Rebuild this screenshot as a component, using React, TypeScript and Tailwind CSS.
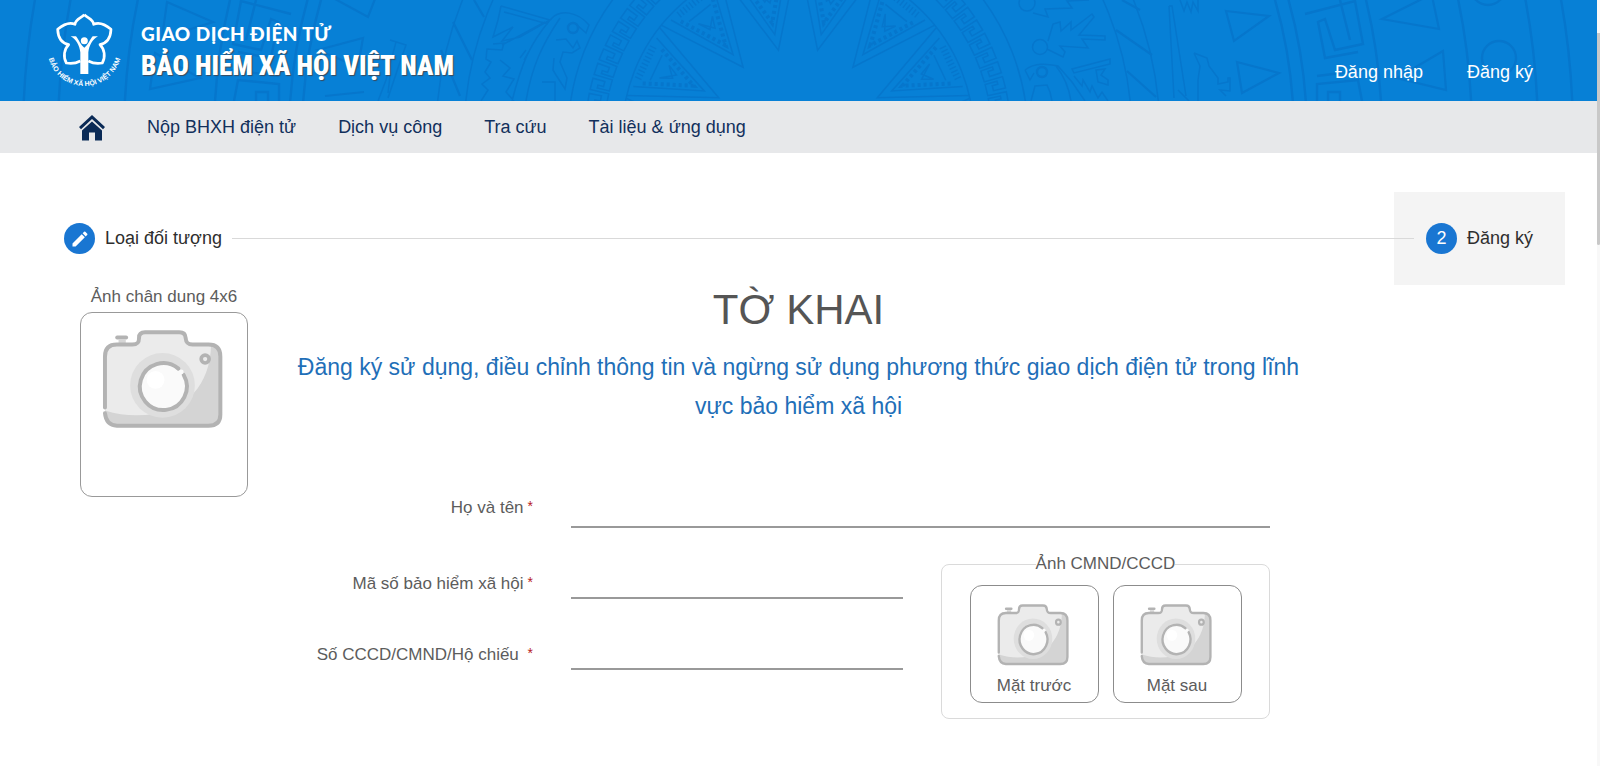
import type { ReactNode } from "react";

const CX = 798;
const CY = 136;

/** Point on the drum at a radius and an angle measured in degrees from straight up. */
function polar(r: number, deg: number) {
  const a = (deg * Math.PI) / 180;
  return `${(CX + r * Math.sin(a)).toFixed(1)} ${(CY - r * Math.cos(a)).toFixed(1)}`;
}

function line(points: [number, number][], close = false) {
  return "M" + points.map(([r, d]) => polar(r, d)).join("L") + (close ? "Z" : "");
}

function meander(inner: number, outer: number, step: number) {
  const h = outer - inner;
  const pts: [number, number][] = [];
  for (let d = -90; d < 90; d += step) {
    pts.push(
      [inner, d],
      [outer, d],
      [outer, d + step * 0.75],
      [inner + h * 0.35, d + step * 0.75],
      [inner + h * 0.35, d + step * 0.4],
      [inner + h * 0.65, d + step * 0.4],
      [inner + h * 0.65, d + step * 0.2],
      [inner, d + step * 0.2],
    );
  }
  return line(pts);
}

const rings = [176, 230, 334, 362, 496, 509, 584, 674, 740, 775];
const rays = [-90, -64.3, -38.6, -12.9, 12.9, 38.6, 64.3, 90];

const key =
  "M1305 14L1355 1L1363 44L1335 50L1325 19L1318 22L1325 58L1358 52M1317 76L1365 70M1317 101V84L1358 80L1362 101M1328 101V92H1340V101M1340 0L1350 40M1303 -4L1330 -10";

const figure =
  "M501 6L550 20L520 37L502 41L513 27L493 37L498 20L501 6M550 20C560 8 578 12 589 25L586 33L577 25M550 20C530 44 522 62 512 101M560 18C542 45 532 66 526 101M556 40L566 39L573 48L577 41L580 48L572 53L563 52L560 62L567 78L565 89L556 75L553 70L554 58M493 44L504 43L502 50L487 49L486 59L491 62L485 72L490 78L482 84L488 90L481 101M500 60L510 68L503 76L514 79L506 92L514 101M502 45L545 22M504 12L548 24M542 82H555V101M526 50L520 58M532 46L524 60";

function DrumPattern() {
  return (
    <svg
      className="absolute inset-0 h-full w-full"
      viewBox="0 0 1597 101"
      preserveAspectRatio="xMidYMid slice"
      fill="none"
      stroke="#0676cc"
      strokeWidth="1.5"
      aria-hidden="true"
    >
      {rings.map((r) => (
        <circle key={r} cx={CX} cy={CY} r={r} strokeWidth={r > 480 ? 2.4 : 1.5} />
      ))}
      {rays.map((d) => (
        <g key={d}>
          <path d={line([[176, d - 12.4], [88, d], [176, d + 12.4]])} />
          <path d={line([[172, d - 9], [104, d], [172, d + 9]])} />
          <path d={line([[164, d - 7], [116, d], [164, d + 7]])} strokeWidth="4" strokeDasharray="3 3" />
          <path d={line([[158, d - 5], [158, d + 5]])} />
          <path d={line([[170, d - 6], [170, d + 6]])} strokeWidth="7" strokeDasharray="1.4 2.4" />
          <path d={line([[150, d - 3], [136, d + 1], [147, d + 3], [138, d - 1]], true)} />
        </g>
      ))}
      <path d={meander(194, 213, 4.2)} />
      <path d={key} strokeWidth="2.4" />
      <path d={key} strokeWidth="2.4" transform="translate(1596 0) scale(-1 1)" />
      <path
        strokeWidth="2.2"
        d="M1226 11L1269 16L1234 41ZM1237 62L1279 73L1242 93ZM1424 -2L1382 19L1439 29L1432 -4M1443 51L1397 78L1446 90ZM167 2L213 22L162 38ZM155 53L150 89L200 78ZM335 -1L368 17L375 -1M318 50L363 38L358 67ZM325 96L364 92M1116 30L1152 55M1127 71L1156 97M1122 0L1140 10M453 22L472 60M441 50L460 96M474 0L484 17"
      />
      <circle cx="1499" cy="58" r="17" strokeWidth="2.4" />
      <circle cx="1488" cy="-12" r="17" strokeWidth="2.4" />
      <path d={figure} />
      <circle cx="573" cy="28" r="5" strokeWidth="2.4" />
      <path d="M1048 41L1053 24L1060 22L1061 31L1071 22L1071 30L1092 14L1094 17L1079 35L1105 36V40L1082 39L1088 48L1060 46L1065 52L1063 57L1047 49M1033 13L1048 17L1045 9L1072 8L1067 1L1089 0" />
      <circle cx="1040" cy="47" r="7.5" />
      <circle cx="1027" cy="3" r="8" />
      <circle cx="1042" cy="72" r="5" strokeWidth="2.4" />
      <path d="M1025 70C1035 62 1048 64 1058 66L1072 82L1085 101M1025 70L1030 80L1034 73M1056 66C1064 76 1069 88 1071 101M1031 101L1035 86L1047 85L1050 92L1052 101M1072 69L1110 59V64L1074 73ZM1096 70L1105 69L1101 75L1108 80V85L1098 82ZM1074 76L1082 86L1083 80L1090 92L1092 86L1098 98L1102 92L1108 101" />
      <path d="M1169 6H1172L1186 96M1169 6L1174 98M1194 53L1207 58L1209 66L1218 78V84L1228 82V78H1230V91L1220 90L1226 96M1194 53L1200 66L1198 80V101M1180 0L1184 11L1187 2L1191 12L1193 2L1198 11V0M1178 90L1189 101M390 40L406 45L400 62L388 98M396 42L386 80L378 101M390 76L388 93" />
    </svg>
  );
}

function Logo() {
  const half =
    "M133 29C142 39 160 42 161 58C178 51 194 57 213 73C212 96 202 114 180 119C194 132 197 156 187 174C172 177 158 175 145 168";
  return (
    <svg className="h-[86px] w-20 shrink-0" viewBox="45 8 80 86" role="img" aria-label="Bảo hiểm xã hội Việt Nam">
      <g transform="translate(40 5) scale(0.3333)">
        <g fill="none" stroke="#fff" strokeWidth="8" strokeLinejoin="round">
          <path d={half} />
          <path d={half} transform="translate(266 0) scale(-1 1)" />
        </g>
        <circle cx="133" cy="107" r="10.5" fill="#fff" />
        <path
          fill="#fff"
          d="M92 94C108 102 119 122 121 142V207H145V142C147 122 158 102 174 94H158C150 104 144 120 133 128C122 120 116 104 108 94Z"
        />
      </g>
      <path id="seal-arc" d="M47.500 49A37 37 0 0 0 121.500 49" fill="none" />
      <text className="fill-white font-['Liberation_Sans',sans-serif] text-[7px] font-bold">
        <textPath href="#seal-arc" startOffset="50%" textAnchor="middle">
          BẢO HIỂM XÃ HỘI VIỆT NAM
        </textPath>
      </text>
    </svg>
  );
}

function Camera({ className }: { className: string }) {
  const body =
    "M9 235V80Q9 44 45 44H92C110 44 112 36 112 24Q112 7 130 7H234Q252 7 253 24C254 38 258 44 274 44H322Q358 44 358 80V256Q358 290 322 290H45Q12 288 9 252";
  return (
    <svg className={className} viewBox="0 0 366 300" preserveAspectRatio="none" fill="none" aria-hidden="true">
      <path d="M50 30H72V44H50Z" fill="#d6d6d6" />
      <path d="M46 23H73" stroke="#b3b3b3" strokeWidth="12" strokeLinecap="round" />
      <path d={body + "V235Z"} fill="#ebebeb" />
      <path d="M330 44Q358 48 358 80V256Q358 290 322 290H45Q12 288 9 244C60 260 110 262 160 254C250 240 328 170 330 44Z" fill="#d4d4d4" />
      <path d={body} stroke="#b3b3b3" strokeWidth="12" strokeLinecap="round" />
      <circle cx="183" cy="168" r="98" fill="#dedede" />
      <circle cx="183" cy="168" r="72" fill="#fafafa" />
      <circle cx="162" cy="151" r="27" fill="#fff" />
      <path d="M231 117A71 71 0 1 0 247 136" stroke="#b3b3b3" strokeWidth="12" strokeLinecap="round" />
      <circle cx="240" cy="127" r="7" fill="#fafafa" />
      <circle cx="312" cy="88" r="12" fill="#ebebeb" stroke="#b3b3b3" strokeWidth="11" />
    </svg>
  );
}

function HomeIcon() {
  return (
    <svg className="h-[26px] w-[26px]" viewBox="0 0 26 26" fill="#0a2a56" aria-hidden="true">
      <path d="M13 0L26 12L24 14.200L13 4L2 14.200L0 12Z" />
      <path d="M13 6.500L23 15.500V25.500H16V17.500H10V25.500H3V15.500Z" />
    </svg>
  );
}

function StepBadge({ children }: { children: ReactNode }) {
  return (
    <span className="flex size-[31px] shrink-0 items-center justify-center rounded-full bg-[#1976d2] text-white">
      {children}
    </span>
  );
}

function Field({ id, label }: { id: string; label: string }) {
  return (
    <>
      <label htmlFor={id} className="flex justify-end gap-1 whitespace-pre leading-6">
        {label}
        <span className="text-[14px] leading-5 text-[#b71c1c]">*</span>
      </label>
      <input id={id} type="text" required className="w-full self-end border-b-2 border-[#999] bg-transparent px-1 outline-none" />
    </>
  );
}

function IdPhoto({ label }: { label: string }) {
  return (
    <button type="button" className="flex w-[129px] flex-col items-center rounded-xl border border-[#8c8c8c] pt-[18px] pb-1">
      <Camera className="mr-[3px] h-[62px] w-[72px]" />
      <span className="mt-2 leading-6">{label}</span>
    </button>
  );
}

const menu = ["Nộp BHXH điện tử", "Dịch vụ công", "Tra cứu", "Tài liệu & ứng dụng"];

export default function App() {
  return (
    <div className="flex min-h-screen bg-white font-['Liberation_Sans',Arial,sans-serif] text-[17px] text-[#5c5c5c]">
      <div className="min-w-0 flex-1">
        <header className="relative flex h-[101px] justify-between overflow-hidden bg-[#0780d6] pr-16 pl-[45px] text-white">
          <DrumPattern />
          <div className="relative flex items-center gap-4">
            <Logo />
            <div className="pt-[3px] font-bold whitespace-nowrap">
              <p className="font-['Lato',sans-serif] text-[19px] leading-7 font-black tracking-wide">GIAO DỊCH ĐIỆN TỬ</p>
              <p className="font-['Liberation_Sans_Narrow','Roboto_Condensed','Open_Sans_Condensed',Roboto,sans-serif] text-[27px] leading-9 font-black [text-shadow:1px_1px_1px_#3b4a5c]">
                BẢO HIỂM XÃ HỘI VIỆT NAM
              </p>
            </div>
          </div>
          <div className="relative flex gap-11 pt-[60px] text-[18px] leading-6">
            <a href="#login">Đăng nhập</a>
            <a href="#register">Đăng ký</a>
          </div>
        </header>

        <nav className="flex h-[52px] items-center gap-[42px] bg-[#e7e8ea] pl-[79px] text-[18px] text-[#12305c]">
          <a href="#home" aria-label="Trang chủ" className="pt-[2px]">
            <HomeIcon />
          </a>
          {menu.map((item) => (
            <a key={item} href="#menu" className="whitespace-nowrap">
              {item}
            </a>
          ))}
        </nav>

        <main className="pt-[39px] pb-10">
          <ol className="mx-8 flex items-center text-[18px] text-[#2e2e2e]">
            <li className="flex h-[93px] items-center gap-[10px] pr-[10px] pl-8">
              <StepBadge>
                <svg className="size-5" viewBox="0 0 24 24" fill="currentColor" aria-hidden="true">
                  <path d="M3 17.250V21h3.750L17.810 9.940l-3.750-3.750L3 17.250zM20.710 7.040a1 1 0 0 0 0-1.410l-2.340-2.340a1 1 0 0 0-1.410 0l-1.830 1.830 3.750 3.750 1.830-1.830z" />
                </svg>
              </StepBadge>
              Loại đối tượng
            </li>
            <li aria-hidden="true" className="relative z-10 -mr-5 h-px flex-1 bg-[#d9d9d9]" />
            <li aria-current="step" className="flex h-[93px] items-center gap-[10px] bg-[#f4f4f4] px-8">
              <StepBadge>2</StepBadge>
              Đăng ký
            </li>
          </ol>

          <form>
            <div className="grid grid-cols-[168px_1fr_168px] px-20">
              <div className="text-center">
                <p className="mb-[3px] leading-6">Ảnh chân dung 4x6</p>
                <button
                  type="button"
                  aria-label="Ảnh chân dung 4x6"
                  className="flex h-[185px] w-full justify-center rounded-xl border border-[#999] pt-[17px] pr-[3px]"
                >
                  <Camera className="h-[99px] w-[121px]" />
                </button>
              </div>
              <div className="text-center">
                <h1 className="text-[42px] leading-[50px] text-[#555]">TỜ KHAI</h1>
                <h2 className="mx-auto mt-[13px] max-w-[1040px] text-[23px] leading-[39px] text-[#1f6fb8]">
                  Đăng ký sử dụng, điều chỉnh thông tin và ngừng sử dụng phương thức giao dịch điện tử trong lĩnh vực bảo hiểm xã hội
                </h2>
              </div>
            </div>

            <div className="mr-[327px] ml-[280px] grid grid-cols-[253px_1fr_329px] gap-x-[38px]">
              <div className="col-span-3 -mt-[1px] grid h-8 grid-cols-[253px_1fr] gap-x-[38px]">
                <Field id="name" label="Họ và tên" />
              </div>
              <div className="col-span-2 mt-11 grid auto-rows-[27px] grid-cols-subgrid content-start gap-y-11">
                <Field id="bhxh" label="Mã số bảo hiểm xã hội" />
                <Field id="cccd" label="Số CCCD/CMND/Hộ chiếu " />
              </div>
              <fieldset className="mt-6 rounded-lg border border-[#dadada] pb-[15px]">
                <legend className="mx-auto leading-6">Ảnh CMND/CCCD</legend>
                <div className="mt-[9px] flex justify-center gap-[14px]">
                  <IdPhoto label="Mặt trước" />
                  <IdPhoto label="Mặt sau" />
                </div>
              </fieldset>
            </div>
          </form>
        </main>
      </div>
      <div className="w-[3px] bg-[#f8f8f8] pt-[33px]" aria-hidden="true">
        <div className="h-[212px] rounded-b bg-[#c8c8c8]" />
      </div>
    </div>
  );
}
